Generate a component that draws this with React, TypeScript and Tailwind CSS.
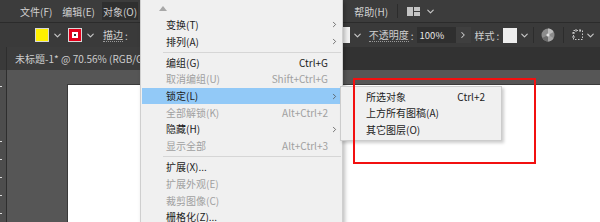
import { ChevronDown, ChevronRight } from "lucide-react";

const font = "font-['Noto_Sans_CJK_SC','Noto_Sans',sans-serif]";

type Item =
  | { sep: true }
  | { sep?: false; label: string; key?: string; sub?: boolean; off?: boolean; hot?: boolean };

const items: Item[] = [
  { label: "变换(T)", sub: true },
  { label: "排列(A)", sub: true },
  { sep: true },
  { label: "编组(G)", key: "Ctrl+G" },
  { label: "取消编组(U)", key: "Shift+Ctrl+G", off: true },
  { label: "锁定(L)", sub: true, hot: true },
  { label: "全部解锁(K)", key: "Alt+Ctrl+2", off: true },
  { label: "隐藏(H)", sub: true },
  { label: "显示全部", key: "Alt+Ctrl+3", off: true },
  { sep: true },
  { label: "扩展(X)..." },
  { label: "扩展外观(E)", off: true },
  { label: "裁剪图像(C)", off: true },
  { label: "栅格化(Z)..." },
];

const lockSub = [
  { label: "所选对象", key: "Ctrl+2" },
  { label: "上方所有图稿(A)" },
  { label: "其它图层(O)" },
];

function Caret() {
  return <ChevronDown className="h-[11px] w-[11px] text-[#c8c8c8]" strokeWidth={2.5} />;
}

function ObjectMenu() {
  return (
    <div className="absolute left-[140px] top-0 h-[230px] w-[203px] border-x border-[#cfcfcf] bg-[#f0f0f0] px-[1px] shadow-[2px_2px_4px_rgba(0,0,0,0.25)]">
      <div className="flex h-[16.67px] items-center pl-[17px]">
        <svg width="8" height="5" viewBox="0 0 8 5">
          <path d="M0 5 L4 0 L8 5 Z" fill="#a8a8a8" />
        </svg>
      </div>
      {items.map((it, i) =>
        it.sep ? (
          <div key={i} className="flex h-[4.5px] items-center pl-[21px]">
            <div className="h-px w-full bg-[#d6d6d6]" />
          </div>
        ) : (
          <div
            key={i}
            className={`flex h-[16.67px] items-center pl-[24px] text-[10px] leading-none ${
              it.hot ? "bg-[#92c9f7]" : ""
            } ${it.off ? "text-[#a0a0a0]" : "text-[#1c1c1c]"}`}
          >
            <span className="flex-1">{it.label}</span>
            {it.key && <span>{it.key}</span>}
            <span className="flex w-[13px] justify-center">
              {it.sub && <ChevronRight className="h-[9px] w-[9px] text-[#4a4a4a]" strokeWidth={2} />}
            </span>
          </div>
        )
      )}
    </div>
  );
}

function LockMenu() {
  return (
    <div className="absolute left-[340px] top-[86px] w-[162px] border border-[#cccccc] bg-[#f0f0f0] py-[1.5px] shadow-[2px_2px_3px_rgba(0,0,0,0.2)]">
      {lockSub.map((it) => (
        <div key={it.label} className="flex h-[16.67px] items-center pl-[25px] pr-[16px] text-[10px] leading-none text-[#1c1c1c]">
          <span className="flex-1">{it.label}</span>
          {it.key && <span>{it.key}</span>}
        </div>
      ))}
    </div>
  );
}

export default function App() {
  return (
    <div className={`relative h-[222px] w-[600px] overflow-hidden bg-[#535353] ${font}`}>
      {/* menu bar */}
      <div className="flex h-[22px] items-center bg-[#3c3c3c] text-[10px] text-[#d2d2d2]">
        <span className="ml-[20px]">文件(F)</span>
        <span className="ml-[10px]">编辑(E)</span>
        <span className="ml-[7px] flex h-[18px] items-center bg-[#2f2f2f] px-[1px]">对象(O)</span>
        <span className="ml-[216px]">帮助(H)</span>
        <div className="ml-[9px] h-[14px] w-px bg-[#2c2c2c]" />
        <svg className="ml-[9px]" width="13" height="9" viewBox="0 0 13 9">
          <rect x="0" y="0" width="6" height="9" fill="#c4c4c4" />
          <rect x="7" y="0" width="6" height="4" fill="#c4c4c4" />
          <rect x="7" y="5" width="6" height="4" fill="#c4c4c4" />
        </svg>
        <span className="ml-[5px]">
          <Caret />
        </span>
      </div>

      {/* control bar */}
      <div className="flex h-[25px] items-center border-t border-[#2b2b2b] bg-[#3a3a3a] text-[10px] text-[#cfcfcf]">
        <div className="ml-[35px] h-[14px] w-[14px] border border-[#d8d8d8] bg-[#fff000]" />
        <span className="ml-[3px]">
          <Caret />
        </span>
        <div className="ml-[5px] flex h-[14px] w-[14px] items-center justify-center border border-[#d8d8d8] bg-[#e3001b]">
          <div className="flex h-[6px] w-[6px] items-center justify-center bg-white">
            <div className="h-[2px] w-[2px] bg-[#333]" />
          </div>
        </div>
        <span className="ml-[3px]">
          <Caret />
        </span>
        <span className="ml-[7px] border-b border-dotted border-[#9a9a9a] leading-[12px]">描边</span>
        <span className="ml-[2px]">:</span>
        <div className="ml-[4px] flex h-[16px] w-[218px] justify-end">
          <div className="h-[16px] w-[12px] bg-[#f2f2f2]" />
        </div>
        <span className="ml-[2px]">
          <Caret />
        </span>
        <span className="ml-[6px] border-b border-dotted border-[#9a9a9a] leading-[12px]">不透明度</span>
        <span className="ml-[2px]">:</span>
        <div className="ml-[3px] flex h-[16px] w-[39px] items-center bg-[#2f2f2f] pl-[3px] text-[9.5px] text-[#e6e6e6]">
          100%
        </div>
        <div className="flex h-[16px] w-[15px] items-center justify-center bg-[#3f3f3f]">
          <ChevronRight className="h-[10px] w-[10px] text-[#d0d0d0]" strokeWidth={2.5} />
        </div>
        <span className="ml-[4px]">样式</span>
        <span className="ml-[2px]">:</span>
        <div className="ml-[4px] h-[15px] w-[14px] bg-[#eeeeee]" />
        <span className="ml-[2px]">
          <Caret />
        </span>
        <div className="ml-[3px] h-[16px] w-px bg-[#2c2c2c]" />
        <svg className="ml-[7px]" width="14" height="14" viewBox="0 0 14 14">
          <circle cx="7" cy="7" r="6.5" fill="#8c8c8c" />
          <path d="M7 7 L7 0.5 A6.5 6.5 0 0 1 12.6 4 Z" fill="#bdbdbd" />
          <path d="M7 7 L1.4 10 A6.5 6.5 0 0 0 7 13.5 Z" fill="#6c6c6c" />
          <path d="M7 7 L12.6 10 A6.5 6.5 0 0 1 7 13.5 Z" fill="#a6a6a6" />
          <circle cx="7" cy="7" r="1.6" fill="#e0e0e0" />
        </svg>
        <div className="ml-[8px] h-[16px] w-px bg-[#2c2c2c]" />
        <svg className="ml-[8px]" width="12" height="12" viewBox="0 0 12 12">
          <rect x="1.5" y="1.5" width="9" height="9" fill="none" stroke="#c8c8c8" strokeDasharray="1.5 1.5" />
          <path d="M0 4h3M0 8h3M4 0v3M8 0v3" stroke="#c8c8c8" />
        </svg>
        <span className="ml-[1px]">
          <Caret />
        </span>
      </div>

      {/* workspace */}
      <div className="flex h-[175px]">
        <div className="flex w-[7px] flex-col border-r border-[#2e2e2e] bg-[#3a3a3a]">
          <div className="h-[23px]" />
          <div className="flex flex-1 flex-col bg-[#4d4d4d] pt-[16px]">
            {[0, 1, 2, 3, 4, 5].map((n) => (
              <div key={n} className={`h-px w-[2px] bg-[#dcdcdc] ${n === 1 ? "mt-[54px]" : n > 1 ? "mt-[17px]" : ""}`} />
            ))}
          </div>
        </div>
        <div className="flex flex-1 flex-col">
          <div className="flex h-[23px] bg-[#323232]">
            <div className="flex w-[250px] items-center bg-[#3c3c3c] pl-[8px] text-[10px] text-[#cdcdcd]">
              未标题-1* @ 70.56% (RGB/GPU 预览)
            </div>
          </div>
          <div className="flex-1 bg-[#565656] pl-[60px] pt-[14px]">
            <div className="h-full w-full border-l border-t border-[#3a3a3a] bg-white" />
          </div>
        </div>
      </div>

      <ObjectMenu />
      <LockMenu />
      <div className="absolute left-[353px] top-[78px] h-[86px] w-[183px] border-2 border-[#f21010]" />
    </div>
  );
}
